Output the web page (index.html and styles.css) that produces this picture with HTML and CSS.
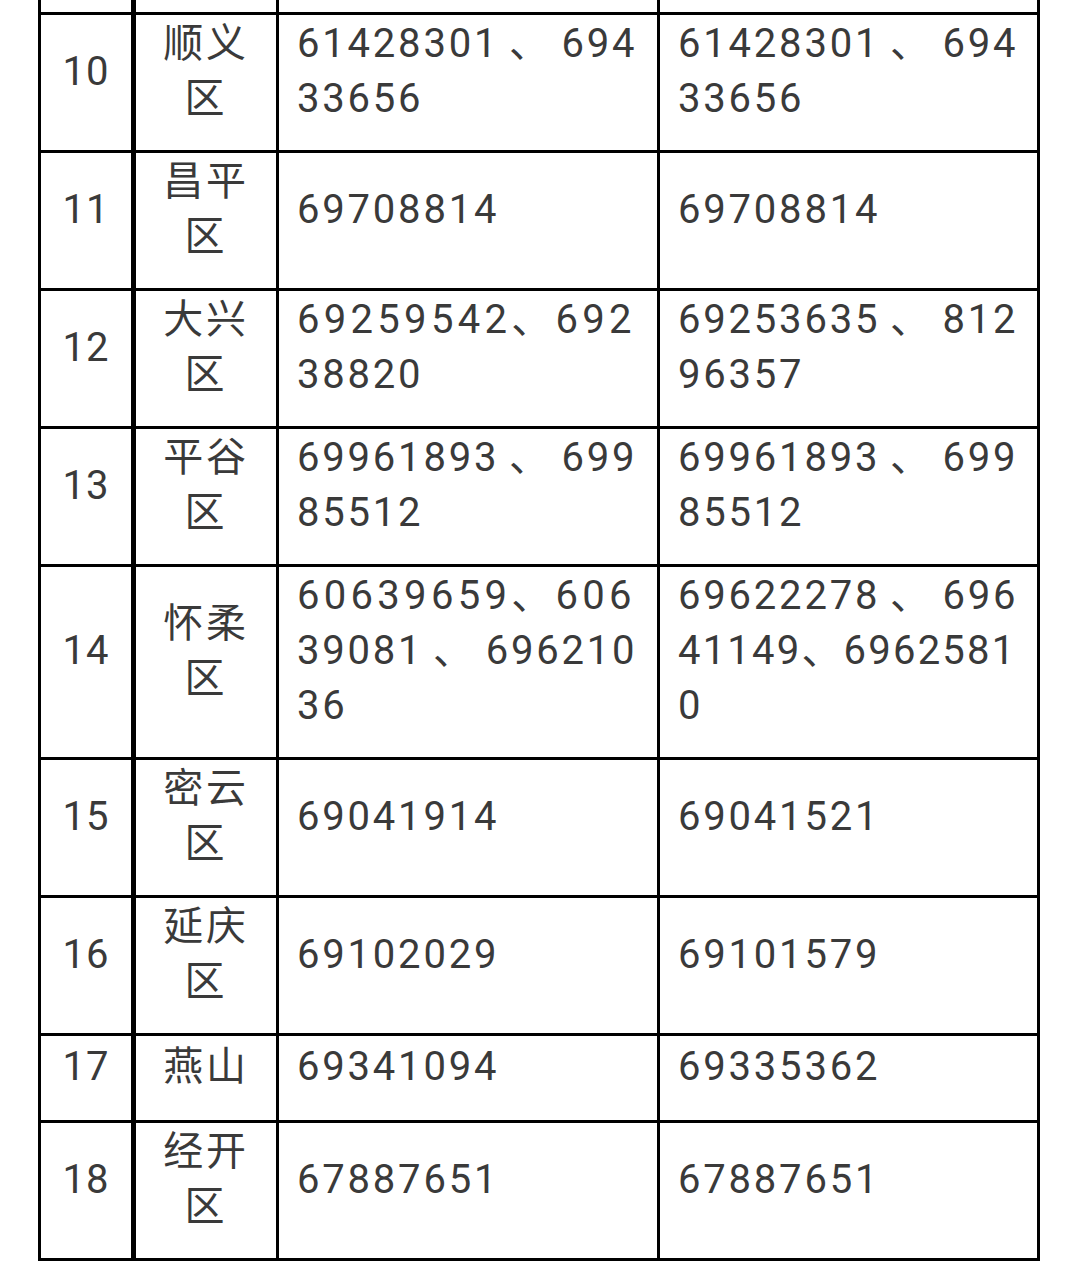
FILE: index.html
```html
<!DOCTYPE html>
<html lang="zh-CN">
<head>
<meta charset="utf-8">
<title>区热线电话</title>
<link rel="stylesheet" href="styles.css">
</head>
<body>
<table class="grid">
  <tr class="cut">
    <td class="c-no"><div class="stub"></div></td>
    <td class="c-area"></td>
    <td class="c-tel"></td>
    <td class="c-tel2"></td>
  </tr>
  <tr>
    <td class="c-no">10</td>
    <td class="c-area"><span class="ln">顺义</span><span class="ln">区</span></td>
    <td class="c-tel"><span class="ln full">61428301 、 694</span><span class="ln">33656</span></td>
    <td class="c-tel2"><span class="ln full">61428301 、 694</span><span class="ln">33656</span></td>
  </tr>
  <tr>
    <td class="c-no">11</td>
    <td class="c-area"><span class="ln">昌平</span><span class="ln">区</span></td>
    <td class="c-tel"><span class="ln">69708814</span></td>
    <td class="c-tel2"><span class="ln">69708814</span></td>
  </tr>
  <tr>
    <td class="c-no">12</td>
    <td class="c-area"><span class="ln">大兴</span><span class="ln">区</span></td>
    <td class="c-tel"><span class="ln loose">69259542、692</span><span class="ln">38820</span></td>
    <td class="c-tel2"><span class="ln full">69253635 、 812</span><span class="ln">96357</span></td>
  </tr>
  <tr>
    <td class="c-no">13</td>
    <td class="c-area"><span class="ln">平谷</span><span class="ln">区</span></td>
    <td class="c-tel"><span class="ln full">69961893 、 699</span><span class="ln">85512</span></td>
    <td class="c-tel2"><span class="ln full">69961893 、 699</span><span class="ln">85512</span></td>
  </tr>
  <tr>
    <td class="c-no">14</td>
    <td class="c-area"><span class="ln">怀柔</span><span class="ln">区</span></td>
    <td class="c-tel"><span class="ln loose">60639659、606</span><span class="ln full">39081 、 696210</span><span class="ln">36</span></td>
    <td class="c-tel2"><span class="ln full">69622278 、 696</span><span class="ln full tight">41149、6962581</span><span class="ln">0</span></td>
  </tr>
  <tr>
    <td class="c-no">15</td>
    <td class="c-area"><span class="ln">密云</span><span class="ln">区</span></td>
    <td class="c-tel"><span class="ln">69041914</span></td>
    <td class="c-tel2"><span class="ln">69041521</span></td>
  </tr>
  <tr>
    <td class="c-no">16</td>
    <td class="c-area"><span class="ln">延庆</span><span class="ln">区</span></td>
    <td class="c-tel"><span class="ln">69102029</span></td>
    <td class="c-tel2"><span class="ln">69101579</span></td>
  </tr>
  <tr class="single">
    <td class="c-no">17</td>
    <td class="c-area"><span class="ln">燕山</span></td>
    <td class="c-tel"><span class="ln">69341094</span></td>
    <td class="c-tel2"><span class="ln">69335362</span></td>
  </tr>
  <tr>
    <td class="c-no">18</td>
    <td class="c-area"><span class="ln">经开</span><span class="ln">区</span></td>
    <td class="c-tel"><span class="ln">67887651</span></td>
    <td class="c-tel2"><span class="ln">67887651</span></td>
  </tr>
</table>
</body>
</html>
```

FILE: styles.css
```css
html, body {
  margin: 0;
  padding: 0;
  background: #ffffff;
}

body {
  font-family: Roboto, "Noto Sans CJK SC", sans-serif;
  font-weight: 400;
  color: #3a3a3a;
}

.grid {
  margin-left: 38px;
  width: 1002px;
  table-layout: fixed;
  border-collapse: separate;
  border-spacing: 0;
  border-left: 3px solid #000;
}

.grid td {
  box-sizing: border-box;
  border-right: 3px solid #000;
  border-bottom: 3px solid #000;
  padding: 1px 0 24px;
  vertical-align: middle;
  font-size: 40px;
  line-height: 55px;
  letter-spacing: 2.8px;
  word-spacing: -3px;
}

.grid .c-no {
  width: 95px;
  border-right-width: 5px;
  text-align: center;
  letter-spacing: 1px;
}

.grid .c-area {
  width: 143px;
  text-align: center;
}

.grid .c-tel {
  width: 381px;
  padding-left: 18px;
  padding-right: 21px;
  text-align: left;
}

.grid .c-tel2 {
  width: 380px;
  padding-left: 18px;
  padding-right: 21px;
  text-align: left;
}

.ln {
  display: block;
  white-space: nowrap;
}

.ln.full {
  text-align: justify;
  text-align-last: justify;
}

.ln.loose {
  letter-spacing: 4.3px;
}

.ln.tight {
  letter-spacing: 2.2px;
}

.grid .cut td {
  padding: 0;
}

.stub {
  height: 12px;
}

.grid .single td {
  padding-top: 3px;
  padding-bottom: 26px;
}
```
